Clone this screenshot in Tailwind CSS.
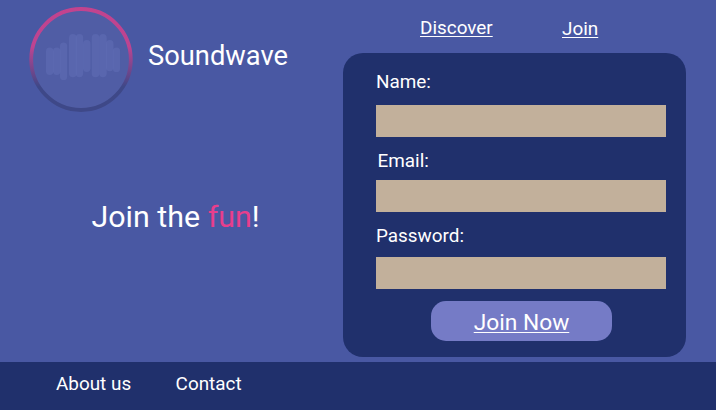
<!DOCTYPE html>
<html lang="en">
<head>
<meta charset="utf-8">
<title>Soundwave</title>
<script src="https://cdn.jsdelivr.net/npm/@tailwindcss/browser@4"></script>
</head>
<body class="flex h-[410px] w-[716px] flex-col overflow-hidden bg-[#4958a3] font-[Roboto,sans-serif] text-[18.9px] leading-6 text-white">
<main class="flex h-[362px] shrink-0">
  <section class="w-[343px] shrink-0">
    <div class="flex h-[120px] pl-[29px]">
      <svg class="mt-[7px] h-[106px] w-[104px] shrink-0" viewBox="29 7 104 106" fill="none">
        <defs><linearGradient id="ring" x1="0" y1="7" x2="0" y2="112" gradientUnits="userSpaceOnUse"><stop offset="0" stop-color="#c2438e"/><stop offset=".38" stop-color="#bd4491"/><stop offset=".76" stop-color="#3e4888"/><stop offset="1" stop-color="#3e4888"/></linearGradient></defs>
        <ellipse cx="81" cy="59.5" rx="49.8" ry="50.5" fill="#505da5" stroke="url(#ring)" stroke-width="3.8"/>
        <g fill="#6270b7" fill-opacity=".5">
          <rect x="46" y="47.5" width="7.5" height="27.5" rx="3.7"/>
          <rect x="53" y="47.5" width="7.5" height="27.5" rx="3.7"/>
          <rect x="60" y="42.5" width="7.2" height="37.5" rx="3.6"/>
          <rect x="69" y="34" width="7.7" height="43.3" rx="3.8"/>
          <rect x="75.7" y="34" width="7.5" height="43.3" rx="3.7"/>
          <rect x="83" y="40" width="7.5" height="32" rx="3.7"/>
          <rect x="91.7" y="34" width="7.7" height="43.3" rx="3.8"/>
          <rect x="99.2" y="34" width="7.5" height="43.3" rx="3.7"/>
          <rect x="106" y="40" width="7.5" height="31.3" rx="3.7"/>
          <rect x="112.8" y="47.5" width="7.3" height="24.5" rx="3.6"/>
        </g>
      </svg>
      <h1 class="mt-[40px] ml-[15px] text-[27.3px] leading-8">Soundwave</h1>
    </div>
    <p class="mt-[79px] ml-[91.5px] text-[30.4px] leading-9 whitespace-nowrap">Join the <span class="text-[#e83e8c]">fun</span>!</p>
  </section>
  <section class="w-[343px] shrink-0">
    <nav class="flex h-[53px] pl-[77px]">
      <a class="mt-[16px] w-[142px]"><span class="underline decoration-1 underline-offset-2">Discover</span></a>
      <a class="mt-[17px]"><span class="underline decoration-1 underline-offset-2">Join</span></a>
    </nav>
    <form class="flex h-[304px] flex-col rounded-[20px] bg-[#20306c] pt-[17px] pl-[33px]">
      <label class="h-[35px]" for="name">Name:</label>
      <input id="name" class="h-8 w-[290px] shrink-0 bg-[#c2b09b]">
      <label class="mt-3 ml-[1.5px] h-[31px]" for="email">Email:</label>
      <input id="email" class="h-8 w-[290px] shrink-0 bg-[#c2b09b]">
      <label class="mt-3 h-[33px]" for="password">Password:</label>
      <input id="password" type="password" class="h-8 w-[290px] shrink-0 bg-[#c2b09b]">
      <button type="button" class="mt-3 ml-[55px] h-10 w-[181px] shrink-0 rounded-[15px] bg-[#757bc6] pt-[4px] text-[22.75px] leading-[36px] underline decoration-1 underline-offset-2">Join Now</button>
    </form>
  </section>
</main>
<footer class="flex h-12 shrink-0 bg-[#20306c] pt-[10px] pl-[56px]">
  <a class="w-[119.6px]">About us</a>
  <a>Contact</a>
</footer>
</body>
</html>
